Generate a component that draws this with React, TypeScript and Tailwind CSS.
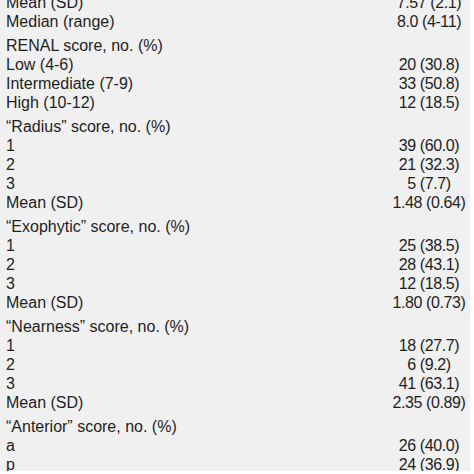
type Row = { label: string; value?: string; head?: boolean };

const rows: Row[] = [
  { label: 'Mean (SD)', value: '7.57 (2.1)' },
  { label: 'Median (range)', value: '8.0 (4-11)' },
  { label: 'RENAL score, no. (%)', head: true },
  { label: 'Low (4-6)', value: '20 (30.8)' },
  { label: 'Intermediate (7-9)', value: '33 (50.8)' },
  { label: 'High (10-12)', value: '12 (18.5)' },
  { label: '\u201cRadius\u201d score, no. (%)', head: true },
  { label: '1', value: '39 (60.0)' },
  { label: '2', value: '21 (32.3)' },
  { label: '3', value: '5 (7.7)' },
  { label: 'Mean (SD)', value: '1.48 (0.64)' },
  { label: '\u201cExophytic\u201d score, no. (%)', head: true },
  { label: '1', value: '25 (38.5)' },
  { label: '2', value: '28 (43.1)' },
  { label: '3', value: '12 (18.5)' },
  { label: 'Mean (SD)', value: '1.80 (0.73)' },
  { label: '\u201cNearness\u201d score, no. (%)', head: true },
  { label: '1', value: '18 (27.7)' },
  { label: '2', value: '6 (9.2)' },
  { label: '3', value: '41 (63.1)' },
  { label: 'Mean (SD)', value: '2.35 (0.89)' },
  { label: '\u201cAnterior\u201d score, no. (%)', head: true },
  { label: 'a', value: '26 (40.0)' },
  { label: 'p', value: '24 (36.9)' },
];

export default function App() {
  return (
    <div className="w-[474px] h-[474px] bg-white overflow-hidden">
      {/* table panel */}
      <div className="w-[470px] h-[471px] bg-[#f0f0f0] overflow-hidden font-['Liberation_Sans',Arial,sans-serif] text-[16px] text-[#1e1e1e]">
        <div className="-mt-[7px]">
          {rows.map((row, i) => (
            <div
              key={i}
              className={`grid grid-cols-[1fr_82px] leading-[19px] ${row.head ? 'pt-[5px]' : ''}`}
            >
              <span className="pl-[6px] whitespace-nowrap">{row.label}</span>
              <span className="text-center whitespace-nowrap tracking-[-0.4px]">{row.value ?? ''}</span>
            </div>
          ))}
        </div>
      </div>
    </div>
  );
}
